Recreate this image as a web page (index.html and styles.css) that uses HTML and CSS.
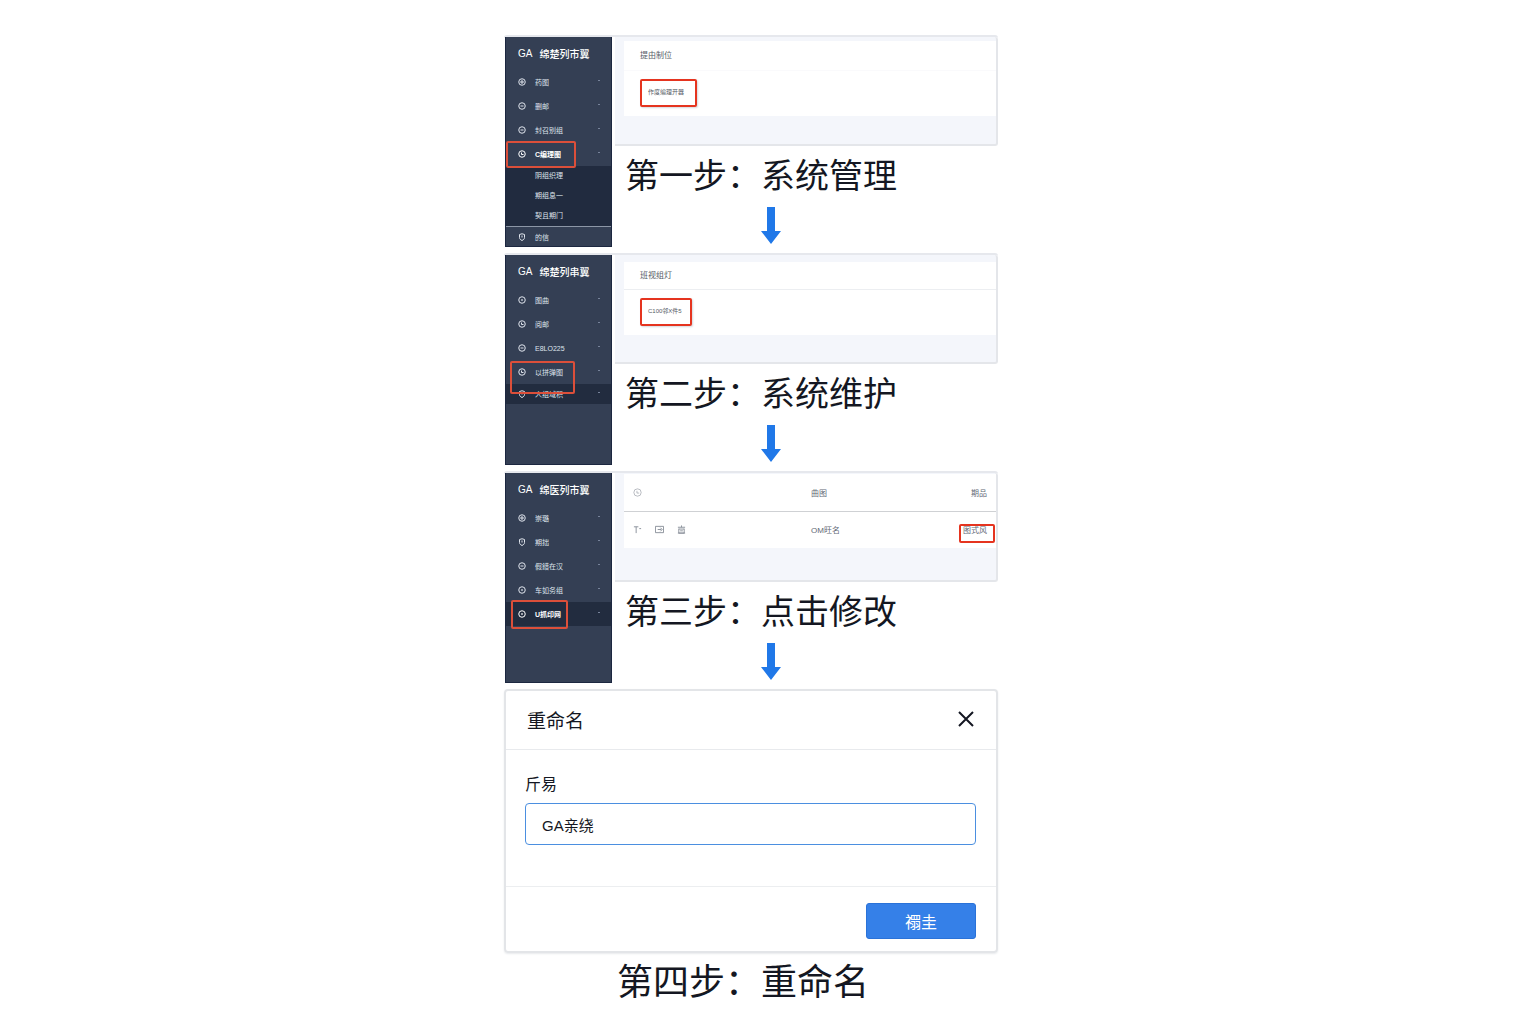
FILE: index.html
```html
<!DOCTYPE html>
<html lang="zh-CN">
<head>
    <meta charset="UTF-8">
    <title>重命名</title>
    <link rel="stylesheet" href="styles.css">
</head>
<body>
    <!-- Shared icons -->
    <svg class="icon-defs" width="0" height="0">
        <symbol id="icon-plus" viewBox="0 0 16 16"><circle cx="8" cy="8" r="6.5"/><path d="M4 8h8M8 4v8"/></symbol>
        <symbol id="icon-minus" viewBox="0 0 16 16"><circle cx="8" cy="8" r="6.5"/><path d="M5 8h6"/></symbol>
        <symbol id="icon-clock" viewBox="0 0 16 16"><circle cx="8" cy="8" r="6.5"/><path d="M7 5v4h4"/></symbol>
        <symbol id="icon-shield" viewBox="0 0 16 16"><path d="M3 3l5-1.5L13 3v6c0 3-2 4.5-5 6-3-1.5-5-3-5-6zM8 5v4"/></symbol>
        <symbol id="icon-dot" viewBox="0 0 16 16"><circle cx="8" cy="8" r="6.5"/><circle cx="8" cy="8" r="1"/></symbol>
        <symbol id="icon-arrow" viewBox="0 0 20 37"><path d="M6 0h8v24h6L10 37 0 24h6z"/></symbol>
    </svg>

    <main class="guide">
        <section class="step">
            <nav class="sidebar">
                <div class="brand"><span>GA</span><span>绵楚列市翼</span></div>
                <a class="item" href="#"><svg><use href="#icon-plus"/></svg>药图<i></i></a>
                <a class="item" href="#"><svg><use href="#icon-minus"/></svg>删邮<i></i></a>
                <a class="item" href="#"><svg><use href="#icon-minus"/></svg>封召别组<i></i></a>
                <a class="item current" href="#"><svg><use href="#icon-clock"/></svg>C编理图<i></i><span class="mark mark-one"></span></a>
                <div class="submenu">
                    <a href="#">阴组织理</a>
                    <a href="#">期组息一</a>
                    <a href="#">契且期门</a>
                </div>
                <a class="item last" href="#"><svg><use href="#icon-shield"/></svg>的信</a>
            </nav>
            <div class="content">
                <div class="panel panel-one">
                    <div class="card">
                        <h3>提由制位</h3>
                        <button class="boxed" type="button">作度编理开器</button>
                    </div>
                </div>
                <h2 class="caption">第一步：系统管理</h2>
                <svg class="arrow"><use href="#icon-arrow"/></svg>
            </div>
        </section>

        <section class="step">
            <nav class="sidebar">
                <div class="brand"><span>GA</span><span>绵楚列串翼</span></div>
                <a class="item" href="#"><svg><use href="#icon-dot"/></svg>图曲<i></i></a>
                <a class="item" href="#"><svg><use href="#icon-clock"/></svg>阅邮<i></i></a>
                <a class="item" href="#"><svg><use href="#icon-minus"/></svg>E8LO225<i></i></a>
                <a class="item" href="#"><svg><use href="#icon-clock"/></svg>以拼弹图<i></i><span class="mark mark-two"></span></a>
                <a class="item dark short" href="#"><svg><use href="#icon-shield"/></svg>人组域积<i></i></a>
            </nav>
            <div class="content">
                <div class="panel panel-two">
                    <div class="card">
                        <h3>班视组灯</h3>
                        <button class="boxed" type="button">C100邻X件5</button>
                    </div>
                </div>
                <h2 class="caption">第二步：系统维护</h2>
                <svg class="arrow"><use href="#icon-arrow"/></svg>
            </div>
        </section>

        <section class="step">
            <nav class="sidebar">
                <div class="brand"><span>GA</span><span>绵医列市翼</span></div>
                <a class="item" href="#"><svg><use href="#icon-plus"/></svg>崇璐<i></i></a>
                <a class="item" href="#"><svg><use href="#icon-shield"/></svg>期拙<i></i></a>
                <a class="item" href="#"><svg><use href="#icon-minus"/></svg>假錯在汉<i></i></a>
                <a class="item" href="#"><svg><use href="#icon-dot"/></svg>车如务组<i></i></a>
                <a class="item dark current" href="#"><svg><use href="#icon-dot"/></svg>U抓印网<i></i><span class="mark mark-three"></span></a>
            </nav>
            <div class="content">
                <div class="panel panel-three">
                    <table>
                        <thead>
                            <tr>
                                <th><svg><use href="#icon-clock"/></svg></th>
                                <th>曲图</th>
                                <th class="action">期品</th>
                            </tr>
                        </thead>
                        <tbody>
                            <tr>
                                <td>
                                    <div class="tools">
                                        <svg viewBox="0 0 10 10"><path d="M1 2h5M3.5 2v7M7 4h2"/></svg>
                                        <svg viewBox="0 0 10 10"><path d="M.5 1.5h9v7h-9zM3 5h4M6 3l2 2-2 2"/></svg>
                                        <svg viewBox="0 0 10 10"><path d="M1 2.5h8M5 .5v2M2 4.5h6M2 4v5h6V4M1 9h8M3.5 6.5h3"/></svg>
                                    </div>
                                </td>
                                <td>OM旺名</td>
                                <td class="action"><a href="#">图式风</a><span class="mark mark-edit"></span></td>
                            </tr>
                        </tbody>
                    </table>
                </div>
                <h2 class="caption">第三步：点击修改</h2>
                <svg class="arrow"><use href="#icon-arrow"/></svg>
            </div>
        </section>

        <form class="dialog">
            <header>
                <h1>重命名</h1>
                <button class="close" type="button" aria-label="关闭">
                    <svg viewBox="0 0 16 16"><path d="M1 1l14 14M15 1L1 15"/></svg>
                </button>
            </header>
            <div class="dialog-body">
                <label for="name">斤易</label>
                <input id="name" type="text" value="GA亲绕">
            </div>
            <footer>
                <button class="submit" type="button">禤圭</button>
            </footer>
        </form>
        <h2 class="caption caption-last">第四步：重命名</h2>
    </main>
</body>
</html>
```
FILE: styles.css
```css
* {
    box-sizing: border-box;
}

body {
    margin: 0;
    background: #fff;
    color: #141722;
    font-family: "Liberation Sans", "Noto Sans CJK SC", sans-serif;
}

h1, h2, h3 {
    margin: 0;
    font-weight: normal;
}

a {
    color: inherit;
    text-decoration: none;
}

button, input {
    font-family: inherit;
}

svg {
    fill: none;
    stroke: currentColor;
}

.icon-defs {
    position: absolute;
}

.guide {
    max-width: 528px;
    margin: 0 auto;
    padding: 35px 34px 0 0;
}

/* One step: dark menu on the left, panel and caption on the right */
.step {
    display: flex;
    align-items: flex-start;
    border-top: 2px solid #e6e8ed;
    border-radius: 3px;
    padding: 0 0 6px 1px;
}

.sidebar {
    display: flex;
    flex-direction: column;
    flex: 0 0 107px;
    height: 210px;
    background: #343f54;
    border: 1px solid #1c2740;
    border-top: 0;
    color: #dfe4ec;
    font-size: 7px;
}

.brand {
    display: flex;
    align-items: center;
    gap: 7px;
    height: 33px;
    padding-left: 12px;
    color: #fff;
    font-size: 10px;
    font-weight: 500;
}

.item {
    position: relative;
    display: flex;
    align-items: center;
    gap: 9px;
    height: 24px;
    padding: 0 11px 0 12px;
}

.item svg {
    width: 8px;
    height: 8px;
    stroke-width: 2;
}

.item i {
    width: 2px;
    height: 1px;
    margin: -4px 0 0 auto;
    background: #77839a;
}

.current {
    color: #fff;
    font-weight: bold;
}

.dark {
    background: #222c3f;
}

.short {
    height: 20px;
}

.submenu {
    background: #212b3f;
    border-bottom: 1px solid #8c96a6;
}

.submenu a {
    display: block;
    padding-left: 29px;
    line-height: 20px;
}

.last {
    height: 19px;
}

/* Red frames that point at the thing to click */
.mark {
    position: absolute;
    z-index: 1;
    border: 2px solid #dc4f3a;
    border-radius: 2px;
}

.mark-one {
    top: -1px;
    bottom: -2px;
    left: 0;
    width: 70px;
}

.mark-two {
    top: 1px;
    bottom: -10px;
    left: 4px;
    width: 65px;
}

.mark-three {
    top: -2px;
    bottom: -3px;
    left: 5px;
    width: 57px;
}

.mark-edit {
    top: 12px;
    right: 1px;
    width: 36px;
    height: 19px;
    border-color: #e5341f;
}

.content {
    flex: 1;
}

.panel {
    height: 109px;
    margin-left: 3px;
    padding-left: 9px;
    background: #f4f6fb;
    border: 2px solid #e4e6ea;
    border-width: 0 2px 2px 0;
    border-radius: 0 3px 3px 0;
}

.panel-one {
    padding-top: 4px;
}

.panel-two {
    padding-top: 7px;
}

.panel-three {
    padding-top: 1px;
}

.card {
    background: #fff;
    padding-bottom: 9px;
}

.card h3 {
    padding-left: 16px;
    border-bottom: 1px solid #fafafc;
    color: #555b66;
    font-size: 8px;
    line-height: 29px;
}

.panel-two h3 {
    border-color: #eceef1;
    line-height: 27px;
}

.boxed {
    display: block;
    height: 28px;
    margin: 8px 0 0 16px;
    padding: 0 8px 4px 6px;
    background: #fff;
    border: 2px solid #e5341f;
    border-radius: 2px;
    box-shadow: 1px 1px 2px #d5d7dc;
    color: #555b66;
    font-size: 6px;
}

.panel-one .boxed {
    padding-right: 11px;
}

table {
    width: 100%;
    background: #fff;
    border-collapse: collapse;
    table-layout: fixed;
    color: #626975;
    font-size: 8px;
}

th, td {
    height: 37px;
    padding: 0;
    font-weight: normal;
    text-align: left;
}

th {
    border-bottom: 1px solid #cfd1d4;
}

th:first-child, td:first-child {
    width: 187px;
    padding-left: 9px;
}

th svg, .tools svg {
    display: block;
    width: 9px;
    height: 9px;
    color: #858b95;
}

.tools {
    display: flex;
    gap: 13px;
}

.action {
    position: relative;
    padding-right: 9px;
    text-align: right;
}

.caption {
    margin-top: 6px;
    padding-left: 13px;
    font-size: 34px;
    line-height: 48px;
}

.arrow {
    display: block;
    width: 20px;
    height: 37px;
    margin: 7px 0 0 149px;
    fill: #2078e8;
    stroke: none;
}

.dialog {
    border: 2px solid #e3e5e8;
    border-radius: 4px;
    box-shadow: 0 1px 2px #e8eaed;
}

.dialog header {
    display: flex;
    align-items: center;
    justify-content: space-between;
    height: 59px;
    padding: 0 20px 2px 21px;
    border-bottom: 1px solid #e8eaed;
}

.dialog h1 {
    font-size: 19px;
}

.close {
    display: flex;
    padding: 2px;
    background: none;
    border: 0;
    color: #141722;
}

.close svg {
    width: 16px;
    height: 16px;
    stroke-width: 2;
}

.dialog-body {
    padding: 23px 20px 41px 19px;
}

.dialog label {
    display: block;
    margin-bottom: 6px;
    font-size: 16px;
    line-height: 24px;
}

.dialog input {
    display: block;
    width: 100%;
    height: 42px;
    padding: 0 16px;
    border: 1px solid #4b8fe0;
    border-radius: 4px;
    color: #141722;
    font-size: 15px;
}

.dialog footer {
    display: flex;
    justify-content: flex-end;
    padding: 16px 20px 12px;
    border-top: 1px solid #eceef0;
}

.submit {
    width: 110px;
    height: 36px;
    background: #3580e8;
    border: 1px solid #2a72d8;
    border-radius: 3px;
    color: #fff;
    font-size: 16px;
}

.caption-last {
    padding-left: 113px;
    font-size: 36px;
}
```
